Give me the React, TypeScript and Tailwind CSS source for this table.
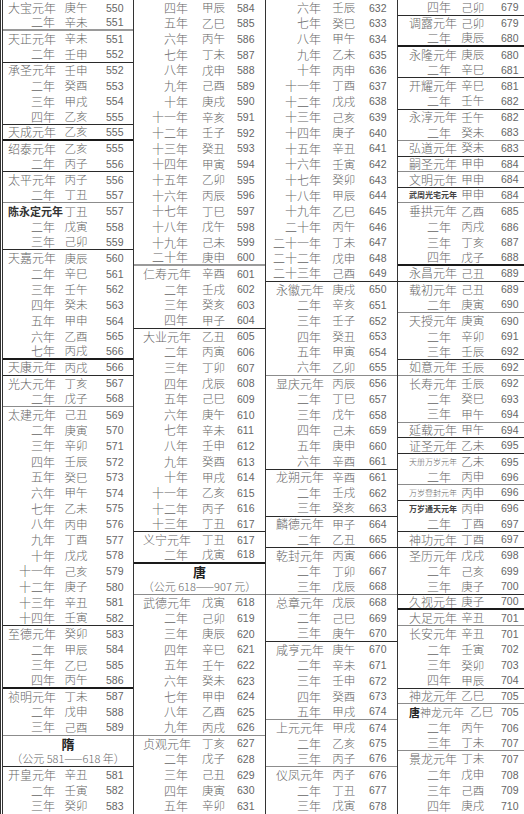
const CJK = '"Noto Sans CJK SC", "Noto Sans CJK TC", sans-serif';

type Col = {
  outer: string;
  grid: string;
  rows: string[];
};

// row format: "name ganzhi year|flag"  flag: k = dark rule, g = grey rule, K / G = thick
// "#x" = dynasty title, "%x" = dynasty span line
const cols: Col[] = [
  {
    outer: 'w-[134px] border-l-[3px] border-double border-l-[#333] border-r border-r-[#333]',
    grid: 'grid-cols-[5px_47px_6px_30px_15px_1fr]',
    rows: [
      '大宝元年 庚午 550', '二年 辛未 551|G', '天正元年 辛未 551', '二年 壬申 552|k',
      '承圣元年 壬申 552', '二年 癸酉 553', '三年 甲戌 554', '四年 乙亥 555|k',
      '天成元年 乙亥 555|K', '绍泰元年 乙亥 555', '二年 丙子 556|k', '太平元年 丙子 556',
      '二年 丁丑 557|g', '陈永定元年 丁丑 557', '二年 戊寅 558', '三年 己卯 559|k',
      '天嘉元年 庚辰 560', '二年 辛巳 561', '三年 壬午 562', '四年 癸未 563',
      '五年 甲申 564', '六年 乙酉 565', '七年 丙戌 566|K', '天康元年 丙戌 566|k',
      '光大元年 丁亥 567', '二年 戊子 568|g', '太建元年 己丑 569', '二年 庚寅 570',
      '三年 辛卯 571', '四年 壬辰 572', '五年 癸巳 573', '六年 甲午 574',
      '七年 乙未 575', '八年 丙申 576', '九年 丁酉 577', '十年 戊戌 578',
      '十一年 己亥 579', '十二年 庚子 580', '十三年 辛丑 581', '十四年 壬寅 582|k',
      '至德元年 癸卯 583', '二年 甲辰 584', '三年 乙巳 585', '四年 丙午 586|K',
      '祯明元年 丁未 587', '二年 戊申 588', '三年 己酉 589|g', '#隋',
      '%（公元 581——618 年）|k', '开皇元年 辛丑 581', '二年 壬寅 582', '三年 癸卯 583',
    ],
  },
  {
    outer: 'w-[132px] border-r border-r-[#333]',
    grid: 'grid-cols-[9px_45px_10.5px_30px_8.5px_1fr]',
    rows: [
      '四年 甲辰 584', '五年 乙巳 585', '六年 丙午 586', '七年 丁未 587',
      '八年 戊申 588', '九年 己酉 589', '十年 庚戌 590', '十一年 辛亥 591',
      '十二年 壬子 592', '十三年 癸丑 593', '十四年 甲寅 594', '十五年 乙卯 595',
      '十六年 丙辰 596', '十七年 丁巳 597', '十八年 戊午 598', '十九年 己未 599',
      '二十年 庚申 600|G', '仁寿元年 辛酉 601', '二年 壬戌 602', '三年 癸亥 603',
      '四年 甲子 604|k', '大业元年 乙丑 605', '二年 丙寅 606', '三年 丁卯 607',
      '四年 戊辰 608', '五年 己巳 609', '六年 庚午 610', '七年 辛未 611',
      '八年 壬申 612', '九年 癸酉 613', '十年 甲戌 614', '十一年 乙亥 615',
      '十二年 丙子 616', '十三年 丁丑 617|k', '义宁元年 丁丑 617', '二年 戊寅 618|K',
      '#唐', '%（公元 618——907 元）|g', '武德元年 戊寅 618', '二年 己卯 619',
      '三年 庚辰 620', '四年 辛巳 621', '五年 壬午 622', '六年 癸未 623',
      '七年 甲申 624', '八年 乙酉 625', '九年 丙戌 626|g', '贞观元年 丁亥 627',
      '二年 戊子 628', '三年 己丑 629', '四年 庚寅 630', '五年 辛卯 631',
    ],
  },
  {
    outer: 'w-[132px] border-r border-r-[#333]',
    grid: 'grid-cols-[10px_45px_7.7px_30px_10.3px_1fr]',
    rows: [
      '六年 壬辰 632', '七年 癸巳 633', '八年 甲午 634', '九年 乙未 635',
      '十年 丙申 636', '十一年 丁酉 637', '十二年 戊戌 638', '十三年 己亥 639',
      '十四年 庚子 640', '十五年 辛丑 641', '十六年 壬寅 642', '十七年 癸卯 643',
      '十八年 甲辰 644', '十九年 乙巳 645', '二十年 丙午 646', '二十一年 丁未 647',
      '二十二年 戊申 648', '二十三年 己酉 649|k', '永徽元年 庚戌 650', '二年 辛亥 651',
      '三年 壬子 652', '四年 癸丑 653', '五年 甲寅 654', '六年 乙卯 655|g',
      '显庆元年 丙辰 656', '二年 丁巳 657', '三年 戊午 658', '四年 己未 659',
      '五年 庚申 660', '六年 辛酉 661|k', '龙朔元年 辛酉 661', '二年 壬戌 662',
      '三年 癸亥 663|k', '麟德元年 甲子 664', '二年 乙丑 665|k', '乾封元年 丙寅 666',
      '二年 丁卯 667', '三年 戊辰 668|g', '总章元年 戊辰 668', '二年 己巳 669',
      '三年 庚午 670|k', '咸亨元年 庚午 670', '二年 辛未 671', '三年 壬申 672',
      '四年 癸酉 673', '五年 甲戌 674|g', '上元元年 甲戌 674', '二年 乙亥 675',
      '三年 丙子 676|g', '仪凤元年 丙子 676', '二年 丁丑 677', '三年 戊寅 678',
    ],
  },
  {
    outer: 'flex-1',
    grid: 'grid-cols-[11px_42px_6.7px_30px_13.3px_1fr]',
    rows: [
      '四年 己卯 679|k', '调露元年 己卯 679', '二年 庚辰 680|K', '永隆元年 庚辰 680',
      '二年 辛巳 681|k', '开耀元年 辛巳 681', '二年 壬午 682|k', '永淳元年 壬午 682',
      '二年 癸未 683|g', '弘道元年 癸未 683|k', '嗣圣元年 甲申 684|g', '文明元年 甲申 684|k',
      '武周光宅元年 甲申 684|g', '垂拱元年 乙酉 685', '二年 丙戌 686', '三年 丁亥 687',
      '四年 戊子 688|K', '永昌元年 己丑 689|k', '载初元年 己丑 689', '二年 庚寅 690|g',
      '天授元年 庚寅 690', '二年 辛卯 691', '三年 壬辰 692|k', '如意元年 壬辰 692|g',
      '长寿元年 壬辰 692', '二年 癸巳 693', '三年 甲午 694|g', '延载元年 甲午 694|k',
      '证圣元年 乙未 695|k', '天册万岁元年 乙未 695', '二年 丙申 696|g', '万岁登封元年 丙申 696|k',
      '万岁通天元年 丙申 696', '二年 丁酉 697|k', '神功元年 丁酉 697|k', '圣历元年 戊戌 698',
      '二年 己亥 699', '三年 庚子 700|k', '久视元年 庚子 700|K', '大足元年 辛丑 701|g',
      '长安元年 辛丑 701', '二年 壬寅 702', '三年 癸卯 703', '四年 甲辰 704|k',
      '神龙元年 乙巳 705|g', '唐神龙元年 乙巳 705', '二年 丙午 706', '三年 丁未 707|g',
      '景龙元年 丁未 707', '二年 戊申 708', '三年 己酉 709', '四年 庚戌 710',
    ],
  },
];

const small = ['武周光宅元年', '天册万岁元年', '万岁登封元年', '万岁通天元年'];

function ruleClass(flag: string) {
  if (flag === 'k') return 'border-b border-b-[#2a2a2a]';
  if (flag === 'K') return 'border-b-2 border-b-[#1a1a1a]';
  if (flag === 'g') return 'border-b border-b-[#8c8c8c]';
  if (flag === 'G') return 'border-b-2 border-b-[#9a9a9a]';
  return '';
}

function Name({ name }: { name: string }) {
  if (small.includes(name)) {
    const dark = name === '武周光宅元年' || name === '万岁通天元年';
    return (
      <div className={`flex items-center whitespace-nowrap text-[8px] ${dark ? 'font-bold text-[#444]' : ''}`}>
        {name}
      </div>
    );
  }
  if (name === '唐神龙元年') {
    return (
      <div className="flex items-center whitespace-nowrap text-[11px]">
        <span className="font-bold text-[#222]">唐</span>神龙元年
      </div>
    );
  }
  if (name === '陈永定元年') {
    return <div className="flex items-center whitespace-nowrap text-[11px] font-bold text-[#333]">{name}</div>;
  }
  const left = name.includes('元年');
  return (
    <div className={`flex items-center whitespace-nowrap ${left ? 'justify-start' : 'justify-end'}`}>{name}</div>
  );
}

function Row({ raw, grid }: { raw: string; grid: string }) {
  const [body, flag = ''] = raw.split('|');
  const rule = ruleClass(flag);

  if (body.startsWith('#')) {
    return (
      <div className={`flex items-center justify-center text-[13px] font-bold text-[#222] ${rule}`}>
        {body.slice(1)}
      </div>
    );
  }
  if (body.startsWith('%')) {
    return (
      <div className={`flex items-center justify-center whitespace-nowrap text-[11px] ${rule}`}>
        {body.slice(1)}
      </div>
    );
  }

  const [name, gz, year] = body.split(' ');
  const shifted = name === '唐神龙元年';
  return (
    <div className={`grid ${grid} items-center ${rule}`}>
      <div />
      <Name name={name} />
      <div />
      <div className={`text-center text-[11.5px] whitespace-nowrap ${shifted ? 'ml-[9px] -mr-[9px]' : ''}`}>{gz}</div>
      <div />
      <div
        className="text-[10.5px] text-[#666] leading-none"
        style={{ fontFamily: '"Liberation Sans", Arial, sans-serif' }}
      >
        {year}
      </div>
    </div>
  );
}

export default function App() {
  return (
    <div
      className="w-[524px] h-[814px] overflow-hidden bg-white flex text-[12px] font-light leading-none text-[#666]"
      style={{ fontFamily: CJK }}
    >
      {cols.map((col, i) => (
        <div key={i} className={`h-[814px] shrink-0 grid grid-rows-[repeat(52,minmax(0,1fr))] ${col.outer}`}>
          {col.rows.map((r, j) => (
            <Row key={j} raw={r} grid={col.grid} />
          ))}
        </div>
      ))}
    </div>
  );
}
